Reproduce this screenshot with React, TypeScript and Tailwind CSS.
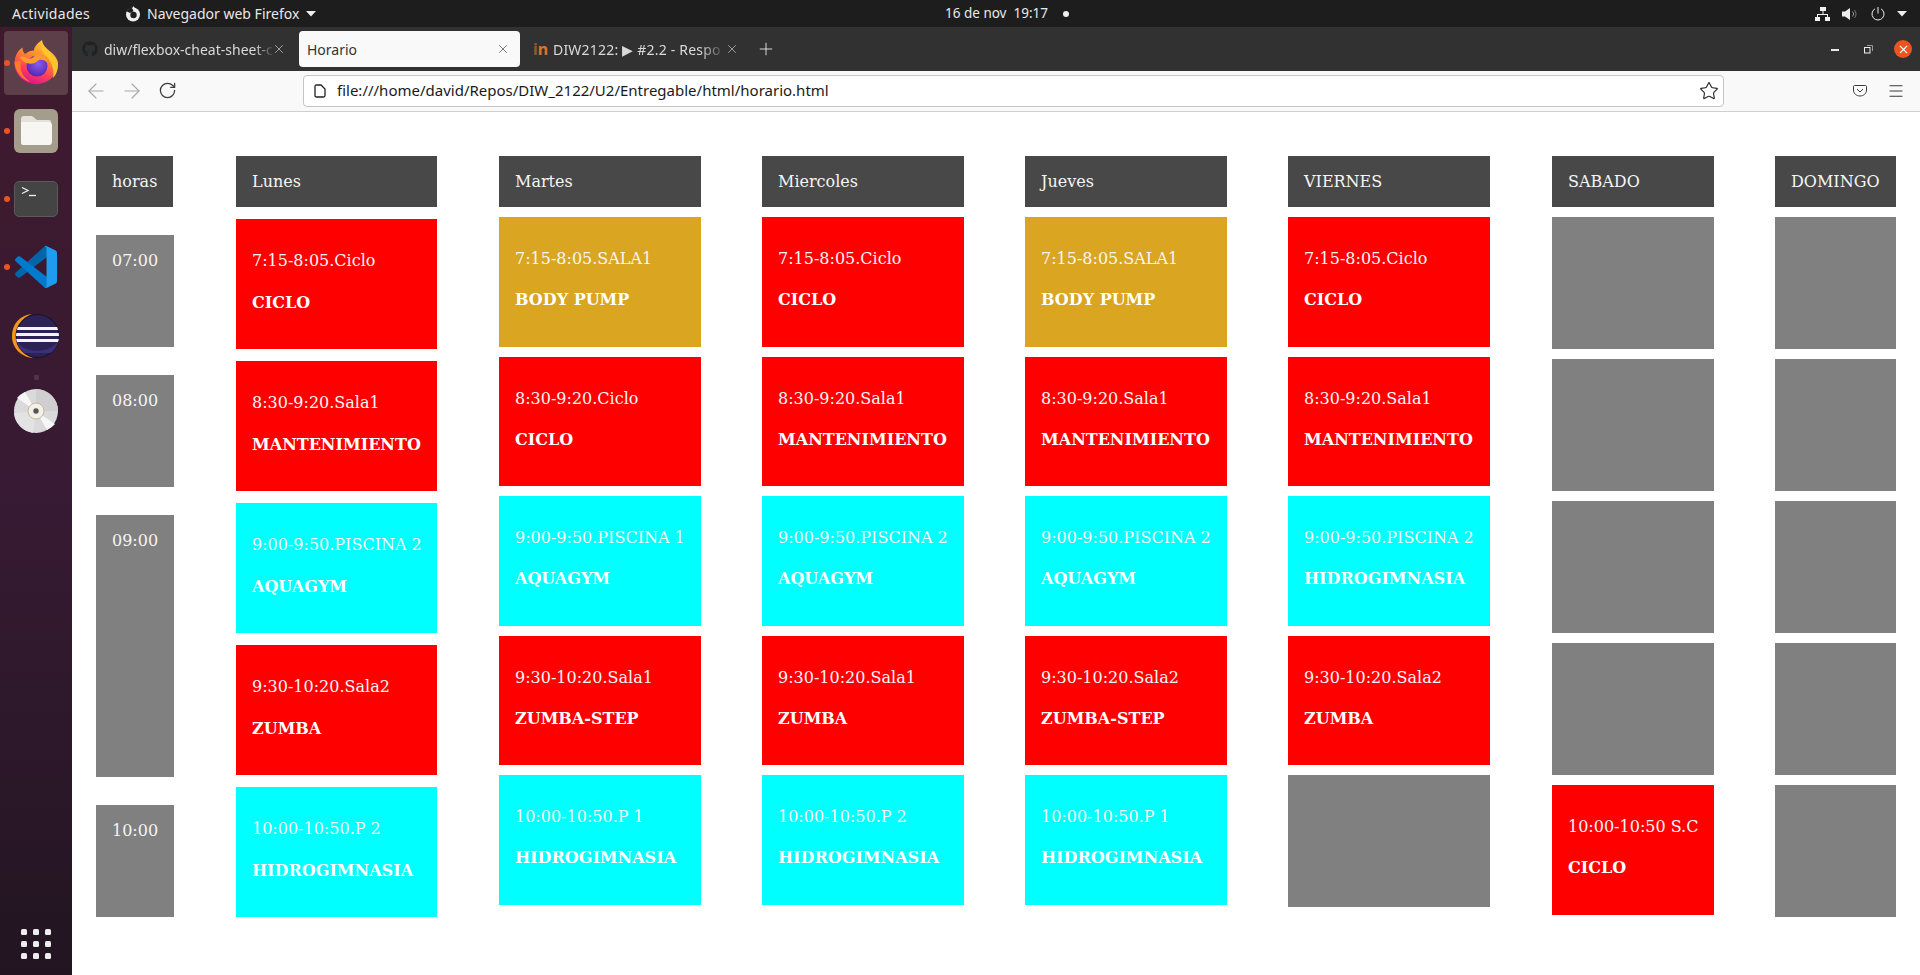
import React from "react";
import { ArrowLeft, ArrowRight, RotateCw, X, Plus, Star, Menu } from "lucide-react";
import { FaGithub } from "react-icons/fa";

const UI = "font-['Noto_Sans',sans-serif]";

type Cell = { t: string; n: string; c: "r" | "c" | "g" };
const R = (t: string, n: string): Cell => ({ t, n, c: "r" });
const C = (t: string, n: string): Cell => ({ t, n, c: "c" });
const G = (t: string, n: string): Cell => ({ t, n, c: "g" });

const days = [
  {
    name: "Martes",
    ml: "ml-[62px]",
    cells: [
      G("7:15-8:05.SALA1", "BODY PUMP"),
      R("8:30-9:20.Ciclo", "CICLO"),
      C("9:00-9:50.PISCINA 1", "AQUAGYM"),
      R("9:30-10:20.Sala1", "ZUMBA-STEP"),
      C("10:00-10:50.P 1", "HIDROGIMNASIA"),
    ],
  },
  {
    name: "Miercoles",
    ml: "ml-[61px]",
    cells: [
      R("7:15-8:05.Ciclo", "CICLO"),
      R("8:30-9:20.Sala1", "MANTENIMIENTO"),
      C("9:00-9:50.PISCINA 2", "AQUAGYM"),
      R("9:30-10:20.Sala1", "ZUMBA"),
      C("10:00-10:50.P 2", "HIDROGIMNASIA"),
    ],
  },
  {
    name: "Jueves",
    ml: "ml-[61px]",
    cells: [
      G("7:15-8:05.SALA1", "BODY PUMP"),
      R("8:30-9:20.Sala1", "MANTENIMIENTO"),
      C("9:00-9:50.PISCINA 2", "AQUAGYM"),
      R("9:30-10:20.Sala2", "ZUMBA-STEP"),
      C("10:00-10:50.P 1", "HIDROGIMNASIA"),
    ],
  },
];

const lunes = [
  R("7:15-8:05.Ciclo", "CICLO"),
  R("8:30-9:20.Sala1", "MANTENIMIENTO"),
  C("9:00-9:50.PISCINA 2", "AQUAGYM"),
  R("9:30-10:20.Sala2", "ZUMBA"),
  C("10:00-10:50.P 2", "HIDROGIMNASIA"),
];

const viernes = [
  R("7:15-8:05.Ciclo", "CICLO"),
  R("8:30-9:20.Sala1", "MANTENIMIENTO"),
  C("9:00-9:50.PISCINA 2", "HIDROGIMNASIA"),
  R("9:30-10:20.Sala2", "ZUMBA"),
];

const bg = { r: "bg-[#ff0000]", c: "bg-[#00ffff]", g: "bg-[#daa520]" };

function Header({ children }: { children: React.ReactNode }) {
  return <div className="h-[51px] shrink-0 bg-[#484848] p-4 leading-[19px] text-[#f5f5f5]">{children}</div>;
}

function Clase({ cell, tall, wide }: { cell: Cell; tall?: boolean; wide?: boolean }) {
  return (
    <div className={`${bg[cell.c]} ${tall ? "h-[130px]" : "h-[129.6px]"} shrink-0 overflow-hidden whitespace-nowrap pl-4 pt-[32px] text-white`}>
      <p className="leading-[19px] text-[#f6f6f6]">{cell.t}</p>
      <p className={`${wide ? "mt-[23px]" : "mt-[22px]"} font-bold leading-[19px]`}>{cell.n}</p>
    </div>
  );
}

function Gris() {
  return <div className="h-[132px] shrink-0 bg-[#808080]" />;
}

function Hora({ t, tall }: { t: string; tall?: boolean }) {
  return <div className={`${tall ? "h-[262px]" : "h-[112px]"} shrink-0 bg-[#808080] p-4 leading-[19px] text-[#f5f5f5]`}>{t}</div>;
}

function Firefox() {
  return (
    <svg viewBox="0 0 44 46" className="h-[46px] w-[44px]">
      <defs>
        <linearGradient id="ffb" x1="0.75" y1="0" x2="0.35" y2="1">
          <stop offset="0" stopColor="#ffd23f" />
          <stop offset="0.4" stopColor="#ff8a2b" />
          <stop offset="0.72" stopColor="#ff3d5e" />
          <stop offset="1" stopColor="#d6128f" />
        </linearGradient>
        <radialGradient id="ffc" cx="0.55" cy="0.4" r="0.7">
          <stop offset="0" stopColor="#8a5cf0" />
          <stop offset="1" stopColor="#4b1fa8" />
        </radialGradient>
      </defs>
      <path d="M0.5 24C0.5 17 3 11 8.5 7.5C8.5 10.5 9.5 12.5 11 14C14 11.5 17 10.500 20 10.500C20 6.500 24 3 28 0C28 4 31 7 35 10.500C41 15 44 19 44 25A21.800 21 0 0 1 0.5 24Z" fill="url(#ffb)" />
      <path d="M28 0C28 5 32 8 36 12C41 17 44 20 44 25C44 30 42 35 39 38C41 30 37 20 31 15C27 12 26 5 28 0Z" fill="#ffc52e" />
      <circle cx="23" cy="26" r="10.500" fill="url(#ffc)" />
      <path d="M5.500 18C9 14.500 12 18 15 18.500C18 19 19 17.500 21 15.500C26 13.500 32 16 33.500 23C30 19 25.500 19 23 21.500C19 25 12.500 24 9 21Z" fill="#ff9c2e" />
      <path d="M0.600 22C1 32 8 40 17 42C9 38 5 30 7 21C5 21 2 21 0.600 22Z" fill="#ff7a25" />
    </svg>
  );
}

function Dock() {
  return (
    <aside className="flex w-[72px] shrink-0 flex-col items-center bg-gradient-to-b from-[#3f1a2e] via-[#371a33] to-[#221521] pt-1">
      <div className="relative flex h-16 w-16 items-center justify-center rounded-[4px] bg-[#5d3f49]">
        <span className="absolute left-[0px] top-[29px] h-1.5 w-1.5 rounded-full bg-[#e95420]" />
        <Firefox />
      </div>
      <div className="relative mt-[14px] h-11 w-11 rounded-[6px] bg-[#a59d8c]">
        <span className="absolute left-[-10px] top-[19px] h-1.5 w-1.5 rounded-full bg-[#e95420]" />
        <svg viewBox="0 0 44 44" className="h-11 w-11">
          <path d="M7 10C7 8 8 7 10 7H18L23 11H35C36.500 11 37 12 37 13V33C37 35 36 36 34 36H10C8 36 7 35 7 33Z" fill="#e5e1da" />
          <path d="M7 13H35C36.500 13 38 14 38 16V33C38 35 36.500 36 35 36H9C8 36 7 35 7 33Z" fill="#f8f6f3" />
        </svg>
      </div>
      <div className="relative mt-[28px] h-[36px] w-11 rounded-[5px] border border-[#5a5a5a] bg-[#444444] pl-1.5 pt-1">
        <span className="absolute left-[-11px] top-[14px] h-1.5 w-1.5 rounded-full bg-[#e95420]" />
        <svg viewBox="0 0 16 12" className="h-3 w-4">
          <path d="M1 1.500L7 4.500L1 7.500" fill="none" stroke="#f0f0f0" strokeWidth="1.300" />
          <path d="M8 9.500H15" stroke="#f0f0f0" strokeWidth="1.300" />
        </svg>
      </div>
      <div className="relative mt-[29px] h-[42px] w-11">
        <span className="absolute left-[-10px] top-[18px] h-1.5 w-1.5 rounded-full bg-[#e95420]" />
        <svg viewBox="0 0 100 100" className="ml-[1px] h-[42px] w-[42px]" preserveAspectRatio="none">
          <path fill="#0065A9" d="M96.46 10.8 75.86.9c-2.39-1.15-5.24-.66-7.11 1.21L1.33 63.58c-1.81 1.65-1.81 4.5 0 6.15l5.51 5.01c1.49 1.35 3.72 1.45 5.32.24L93.33 13.33c2.73-2.07 6.67-.12 6.67 3.3v-.24c0-2.4-1.38-4.59-3.54-5.63Z" />
          <path fill="#007ACC" d="M96.46 89.2 75.86 99.1c-2.39 1.15-5.24.66-7.11-1.21L1.33 36.42c-1.81-1.65-1.81-4.5 0-6.15l5.51-5.01c1.49-1.35 3.72-1.45 5.32-.24L93.33 86.67c2.73 2.07 6.67.12 6.67-3.3v.24c0 2.4-1.38 4.59-3.54 5.63Z" />
          <path fill="#1F9CF0" d="M75.86 99.13c-2.39 1.15-5.24.66-7.11-1.21 2.3 2.3 6.25.67 6.25-2.59V4.67c0-3.26-3.95-4.89-6.25-2.59 1.87-1.87 4.72-2.36 7.11-1.21l20.6 9.91c2.17 1.04 3.54 3.23 3.54 5.63v67.18c0 2.4-1.37 4.59-3.54 5.63Z" />
        </svg>
      </div>
      <svg viewBox="0 0 48 46" className="mt-[25px] h-[46px] w-12">
        <defs>
          <clipPath id="ecl"><circle cx="25.500" cy="23" r="21.500" /></clipPath>
        </defs>
        <path d="M20 1C8 2 0 11 0 23C0 35 9 44 21 45C11 42 5 33 5 23C5 13 11 4 20 1Z" fill="#f7941e" />
        <circle cx="25.500" cy="23" r="22" fill="#15132e" />
        <circle cx="25.500" cy="23" r="21" fill="#2c2255" />
        <g clipPath="url(#ecl)">
          <path d="M4 25C8 42 42 42 47 25V40H4Z" fill="#3a2f79" />
          <rect x="3" y="14" width="45" height="3" fill="#f4f3f8" />
          <rect x="3" y="20" width="45" height="3" fill="#f4f3f8" />
          <rect x="3" y="26" width="45" height="3" fill="#f4f3f8" />
        </g>
      </svg>
      <span className="mt-[16px] h-[5px] w-[5px] rounded-[1px] bg-[#4c3350]" />
      <svg viewBox="0 0 44 44" className="mt-[9px] h-11 w-11">
        <circle cx="22" cy="22" r="22" fill="#dadada" />
        <path d="M22 22L3 9A22 22 0 0 1 11 3Z" fill="#f6f6f6" />
        <path d="M22 22L41 35A22 22 0 0 1 33 41Z" fill="#f6f6f6" />
        <path d="M22 22L22 0A22 22 0 0 1 44 22Z" fill="#cfcfcf" />
        <path d="M22 22L0 24A22 22 0 0 0 19 44Z" fill="#e3e3e3" />
        <circle cx="22" cy="22" r="8" fill="#f3f0e8" stroke="#b9ac90" strokeWidth="0.800" />
        <circle cx="22" cy="22" r="2.700" fill="#555555" />
      </svg>
      <div className="mb-[16px] mt-auto grid grid-cols-3 gap-[6px]">
        {Array.from({ length: 9 }).map((_, i) => (
          <span key={i} className="h-1.5 w-1.5 rounded-[1.5px] bg-[#eeeeee]" />
        ))}
      </div>
    </aside>
  );
}

function TopBar() {
  return (
    <header className={`${UI} flex h-[27px] shrink-0 items-center bg-[#1d1d1d] text-[14px] leading-none text-[#e8e8e8]`}>
      <span className="ml-[12px] w-[112px] tracking-[0.3px]">Actividades</span>
      <svg viewBox="0 0 16 16" className="ml-[1px] h-[16px] w-[16px]">
        <circle cx="8" cy="8.500" r="7" fill="#eeeeee" />
        <circle cx="8.500" cy="9" r="3.200" fill="#1d1d1d" />
        <path d="M1 5L5 7L9 5L6 1Z" fill="#1d1d1d" />
        <path d="M8 0L11 3L8 5Z" fill="#eeeeee" />
      </svg>
      <span className="ml-[6px] w-[155px] whitespace-nowrap">Navegador web Firefox</span>
      <svg viewBox="0 0 10 6" className="ml-[4px] h-[6px] w-[10px]"><path d="M0 0H10L5 5.500Z" fill="#eeeeee" /></svg>
      <span className="ml-[629px] w-[103px] whitespace-nowrap text-[13.500px]">16 de nov&nbsp; 19:17</span>
      <span className="ml-[15px] h-[6px] w-[6px] rounded-full bg-[#f0f0f0]" />
      <svg viewBox="0 0 16 14" className="ml-[746px] h-[14px] w-[16px]" fill="#f2f2f2">
        <rect x="5" y="0" width="6" height="4" />
        <rect x="0" y="10" width="5" height="4" />
        <rect x="10" y="10" width="5" height="4" />
        <path d="M7.500 4H8.500V7H13V10H12V8H3V10H2V7H7.500Z" />
      </svg>
      <svg viewBox="0 0 16 14" className="ml-[11px] h-[14px] w-[16px]">
        <path d="M0 4.500H3L8 1V13L3 9.500H0Z" fill="#eeeeee" />
        <path d="M10.500 4.500A3.500 3.500 0 0 1 10.500 9.500" fill="none" stroke="#999999" strokeWidth="1" />
        <path d="M12.500 3A6 6 0 0 1 12.500 11" fill="none" stroke="#777777" strokeWidth="1" />
      </svg>
      <svg viewBox="0 0 14 14" className="ml-[13px] h-[14px] w-[14px]" fill="none" stroke="#eeeeee" strokeWidth="1">
        <path d="M4 1.800A6 6 0 1 0 10 1.800" />
        <path d="M7 0V6.500" />
      </svg>
      <svg viewBox="0 0 10 6" className="ml-[12px] h-[6px] w-[10px]"><path d="M0 0H10L5 5.500Z" fill="#eeeeee" /></svg>
    </header>
  );
}

function TabBar() {
  return (
    <div className={`${UI} flex h-[44px] shrink-0 items-center bg-[#323132] text-[14px] text-[#d9d9d9]`}>
      <div className="flex w-[227px] items-center pl-[10px]">
        <FaGithub className="h-4 w-4 shrink-0 text-[#202225]" />
        <span className="ml-[6px] w-[171px] whitespace-nowrap [mask-image:linear-gradient(to_right,black_88%,transparent)]">diw/flexbox-cheat-sheet-c</span>
        <X className="ml-[-3px] h-[14px] w-[14px] shrink-0" strokeWidth={1.1} />
      </div>
      <div className="flex h-[36px] w-[221px] items-center rounded-[4px] bg-[#f9f9fa] pl-[8px] text-[#333333]">
        <span className="w-[189px]">Horario</span>
        <X className="h-[14px] w-[14px]" strokeWidth={1.1} />
      </div>
      <div className="flex w-[225px] items-center pl-[13px]">
        <span className="w-[17px] text-[16px] font-bold leading-none text-[#d9752a]"><span className="text-[#8a5a30]">i</span>n</span>
        <span className="ml-[3px] w-[173px] whitespace-nowrap tracking-[0.2px] [mask-image:linear-gradient(to_right,black_85%,transparent)]">DIW2122: ▶ #2.2 - Respo</span>
        <X className="ml-[-1px] h-[14px] w-[14px] shrink-0" strokeWidth={1.1} />
      </div>
      <Plus className="ml-[11px] h-5 w-5 text-[#e8e8e8]" strokeWidth={1.1} />
      <span className="ml-[1055px] h-[1.500px] w-[8px] translate-y-[1px] bg-[#e8e8e8]" />
      <svg viewBox="0 0 9 9" className="ml-[25px] h-[9px] w-[9px]" fill="none">
        <rect x="0.500" y="2.500" width="5.500" height="5.500" stroke="#eeeeee" />
        <path d="M3 0.500H8.500V6" stroke="#999999" />
      </svg>
      <span className="ml-[21px] flex h-[18px] w-[18px] items-center justify-center rounded-full bg-[#e95420]">
        <X className="h-[13px] w-[13px] text-white" strokeWidth={2} />
      </span>
    </div>
  );
}

function Toolbar() {
  return (
    <div className={`${UI} flex h-[41px] shrink-0 items-center border-b border-[#cfcfd0] bg-[#f9f9fa] pb-[1px] text-[15px]`}>
      <ArrowLeft className="ml-[12px] h-6 w-6 text-[#a8a8a8]" strokeWidth={1.100} />
      <ArrowRight className="ml-[12px] h-6 w-6 text-[#a8a8a8]" strokeWidth={1.100} />
      <RotateCw className="ml-[14px] h-[19px] w-[19px] text-[#3c3c3c]" strokeWidth={1.600} />
      <div className="ml-[126px] flex h-[32px] w-[1421px] items-center rounded-[4px] border border-[#c5c5c5] bg-white pl-[10px] pr-[4px]">
        <svg viewBox="0 0 12 14" className="h-[14px] w-[12px]" fill="none" stroke="#1f1f1f" strokeWidth="1.300">
          <path d="M1 2.500C1 1.500 1.500 1 2.500 1H7L11 5V11.500C11 12.500 10.500 13 9.500 13H2.500C1.500 13 1 12.500 1 11.500Z" />
        </svg>
        <span className="ml-[11px] whitespace-nowrap text-[#1a1a1a]">file:///home/david/Repos/DIW_2122/U2/Entregable/html/horario.html</span>
        <Star className="ml-auto h-5 w-5 text-[#2a2a2a]" strokeWidth={1.400} />
      </div>
      <svg viewBox="0 0 14 12" className="ml-[129px] h-[13px] w-[14px]" fill="none" stroke="#3a3a3a" strokeWidth="1">
        <path d="M1.500 1H12.500C13 1 13.500 1.500 13.500 2V5.500C13.500 9 10.500 11.500 7 11.500C3.500 11.500 0.500 9 0.500 5.500V2C0.500 1.500 1 1 1.500 1Z" />
        <path d="M4 4.500L7 7.500L10 4.500" />
      </svg>
      <Menu className="ml-[20px] h-[18px] w-[18px] text-[#3a3a3a]" strokeWidth={1.500} />
    </div>
  );
}

function Horario() {
  return (
    <main className="flex grow bg-white pl-[24px] pt-[44px] font-['DejaVu_Serif',serif] text-[16px]">
      <section className="flex w-[78px] shrink-0 flex-col gap-[28px]">
        <div className="w-[77px]"><Header>horas</Header></div>
        <Hora t="07:00" />
        <Hora t="08:00" />
        <Hora t="09:00" tall />
        <Hora t="10:00" />
      </section>

      <section className="ml-[62px] flex w-[201px] shrink-0 flex-col gap-[12px]">
        <Header>Lunes</Header>
        {lunes.map((c) => <Clase key={c.t} cell={c} tall wide />)}
      </section>

      {days.map((d) => (
        <section key={d.name} className={`${d.ml} flex w-[202px] shrink-0 flex-col gap-[10px]`}>
          <Header>{d.name}</Header>
          {d.cells.map((c) => <Clase key={c.t} cell={c} />)}
        </section>
      ))}

      <section className="ml-[61px] flex w-[202px] shrink-0 flex-col gap-[10px]">
        <Header>VIERNES</Header>
        {viernes.map((c) => <Clase key={c.t} cell={c} />)}
        <Gris />
      </section>

      <section className="ml-[62px] flex w-[162px] shrink-0 flex-col gap-[10px]">
        <Header>SABADO</Header>
        <Gris />
        <Gris />
        <Gris />
        <Gris />
        <Clase cell={R("10:00-10:50 S.C", "CICLO")} tall />
      </section>

      <section className="ml-[61px] flex w-[121px] shrink-0 flex-col gap-[10px]">
        <Header>DOMINGO</Header>
        <Gris />
        <Gris />
        <Gris />
        <Gris />
        <Gris />
      </section>
    </main>
  );
}

export default function App() {
  return (
    <div className="flex h-[975px] w-[1920px] flex-col overflow-hidden">
      <TopBar />
      <div className="flex min-h-0 grow">
        <Dock />
        <div className="flex min-w-0 grow flex-col">
          <TabBar />
          <Toolbar />
          <Horario />
        </div>
      </div>
    </div>
  );
}
